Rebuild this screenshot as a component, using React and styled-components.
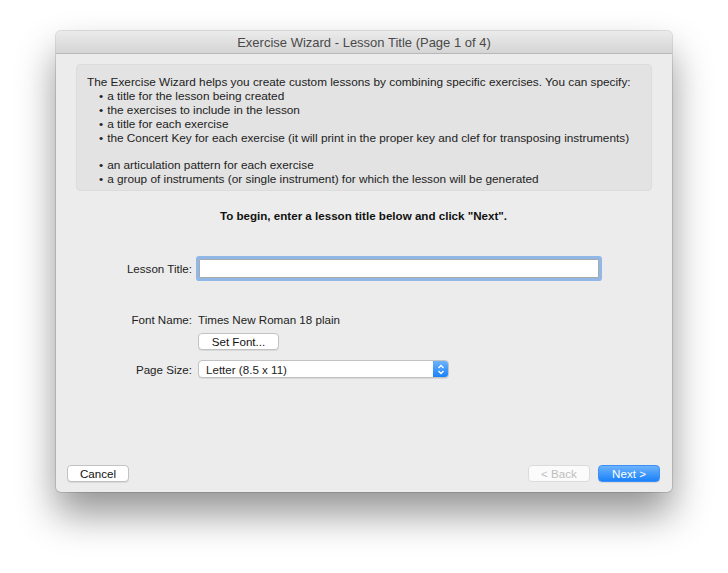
import React from 'react'
import styled, { createGlobalStyle } from 'styled-components'

const Global = createGlobalStyle`
  html, body { margin: 0; padding: 0; background: #ffffff; }
  body { font-family: "Liberation Sans", Arial, sans-serif; }
  #root { padding: 31px 0 0 56px; height: 573px; box-sizing: border-box; overflow: hidden; }
`

const Window = styled.div`
  width: 616px;
  height: 461px;
  border-radius: 5px;
  background: #ececec;
  box-shadow: 0 0 0 1px rgba(0,0,0,0.12), 0 22px 38px rgba(0,0,0,0.42);
  display: flex;
  flex-direction: column;
  overflow: hidden;
`

const TitleBar = styled.div`
  height: 22px;
  flex: none;
  background: linear-gradient(#ebebeb, #d5d5d5);
  border-bottom: 1px solid #b8b8b8;
  display: flex;
  align-items: center;
  justify-content: center;
  font-size: 13px;
  color: #4a4a4a;
`

const Body = styled.div`
  flex: 1;
  display: flex;
  flex-direction: column;
  padding: 10px 12px 10px 11px;
`

const InfoBox = styled.div`
  margin: 0 8px 0 9px;
  height: 127px;
  box-sizing: border-box;
  background: #e3e3e3;
  border: 1px solid #dcdcdc;
  border-radius: 4px;
  padding: 10px 10px 0 10px;
  font-size: 11.8px;
  line-height: 14px;
  color: #222;
`

const Bullets = styled.ul`
  list-style: none;
  margin: 0;
  padding: 0 0 0 12px;
`

const Bullet = styled.li`
  margin-bottom: ${p => (p.gap ? '13px' : '0')};
  &::before {
    content: '•';
    margin-right: 4px;
  }
`

const Instruction = styled.div`
  margin-top: 18px;
  text-align: center;
  font-size: 11.6px;
  font-weight: bold;
  color: #111;
`

const Form = styled.div`
  display: grid;
  grid-template-columns: 125px 1fr;
  column-gap: 6px;
  align-items: center;
  margin-top: 37px;
  font-size: 11.6px;
  color: #222;
`

const Label = styled.div`
  text-align: right;
  margin-top: ${p => p.mt || 0}px;
`

const Field = styled.div`
  margin-top: ${p => p.mt || 0}px;
  display: flex;
`

const TextInput = styled.div`
  width: 398px;
  height: 17px;
  background: #fff;
  border: 1px solid #a9a9a9;
  box-shadow: 0 0 0 3px rgba(115, 165, 230, 0.75);
  border-radius: 1px;
  margin-left: 1px;
`

const Value = styled.div`
  padding-left: 0;
`

const PushButton = styled.div`
  height: 17px;
  box-sizing: border-box;
  width: ${p => p.w}px;
  border-radius: 4px;
  display: flex;
  align-items: center;
  justify-content: center;
  font-size: 11.6px;
  background: ${p => (p.primary ? 'linear-gradient(#6cb3fa, #1a82fb)' : '#fff')};
  color: ${p => (p.primary ? '#fff' : p.disabled ? '#b3b3b3' : '#111')};
  border: 1px solid ${p => (p.primary ? '#3d8ef6' : p.disabled ? '#d8d8d8' : '#c2c2c2')};
  opacity: ${p => (p.disabled ? 0.8 : 1)};
  box-shadow: ${p => (p.disabled ? 'none' : '0 1px 0 rgba(0,0,0,0.08)')};
`

const Select = styled.div`
  width: 251px;
  height: 18px;
  box-sizing: border-box;
  background: #fff;
  border: 1px solid #c2c2c2;
  border-radius: 4px;
  display: flex;
  align-items: center;
  overflow: hidden;
  box-shadow: 0 1px 0 rgba(0,0,0,0.08);
`

const SelectText = styled.div`
  flex: 1;
  padding-left: 7px;
`

const Stepper = styled.div`
  width: 15px;
  height: 100%;
  background: linear-gradient(#6cb3fa, #1a82fb);
  display: flex;
  align-items: center;
  justify-content: center;
`

const Footer = styled.div`
  margin-top: auto;
  display: flex;
  align-items: center;
  gap: 8px;
`

const Spacer = styled.div`
  flex: 1;
`

export default function App() {
  return (
    <>
      <Global />
      <Window>
        <TitleBar>Exercise Wizard - Lesson Title (Page 1 of 4)</TitleBar>
        <Body>
          <InfoBox>
            <div>The Exercise Wizard helps you create custom lessons by combining specific exercises. You can specify:</div>
            <Bullets>
              <Bullet>a title for the lesson being created</Bullet>
              <Bullet>the exercises to include in the lesson</Bullet>
              <Bullet>a title for each exercise</Bullet>
              <Bullet gap>the Concert Key for each exercise (it will print in the proper key and clef for transposing instruments)</Bullet>
              <Bullet>an articulation pattern for each exercise</Bullet>
              <Bullet>a group of instruments (or single instrument) for which the lesson will be generated</Bullet>
            </Bullets>
          </InfoBox>
          <Instruction>To begin, enter a lesson title below and click "Next".</Instruction>
          <Form>
            <Label>Lesson Title:</Label>
            <Field><TextInput /></Field>
            <Label mt={35}>Font Name:</Label>
            <Field mt={35}><Value>Times New Roman 18 plain</Value></Field>
            <div />
            <Field mt={7}><PushButton w={81}>Set Font...</PushButton></Field>
            <Label mt={10}>Page Size:</Label>
            <Field mt={10}>
              <Select>
                <SelectText>Letter (8.5 x 11)</SelectText>
                <Stepper>
                  <svg width="8" height="11" viewBox="0 0 8 11">
                    <path d="M1.5 4 L4 1.5 L6.5 4 M1.5 7 L4 9.5 L6.5 7" fill="none" stroke="#fff" strokeWidth="1.3" />
                  </svg>
                </Stepper>
              </Select>
            </Field>
          </Form>
          <Footer>
            <PushButton w={62}>Cancel</PushButton>
            <Spacer />
            <PushButton w={62} disabled>&lt; Back</PushButton>
            <PushButton w={62} primary>Next &gt;</PushButton>
          </Footer>
        </Body>
      </Window>
    </>
  )
}
